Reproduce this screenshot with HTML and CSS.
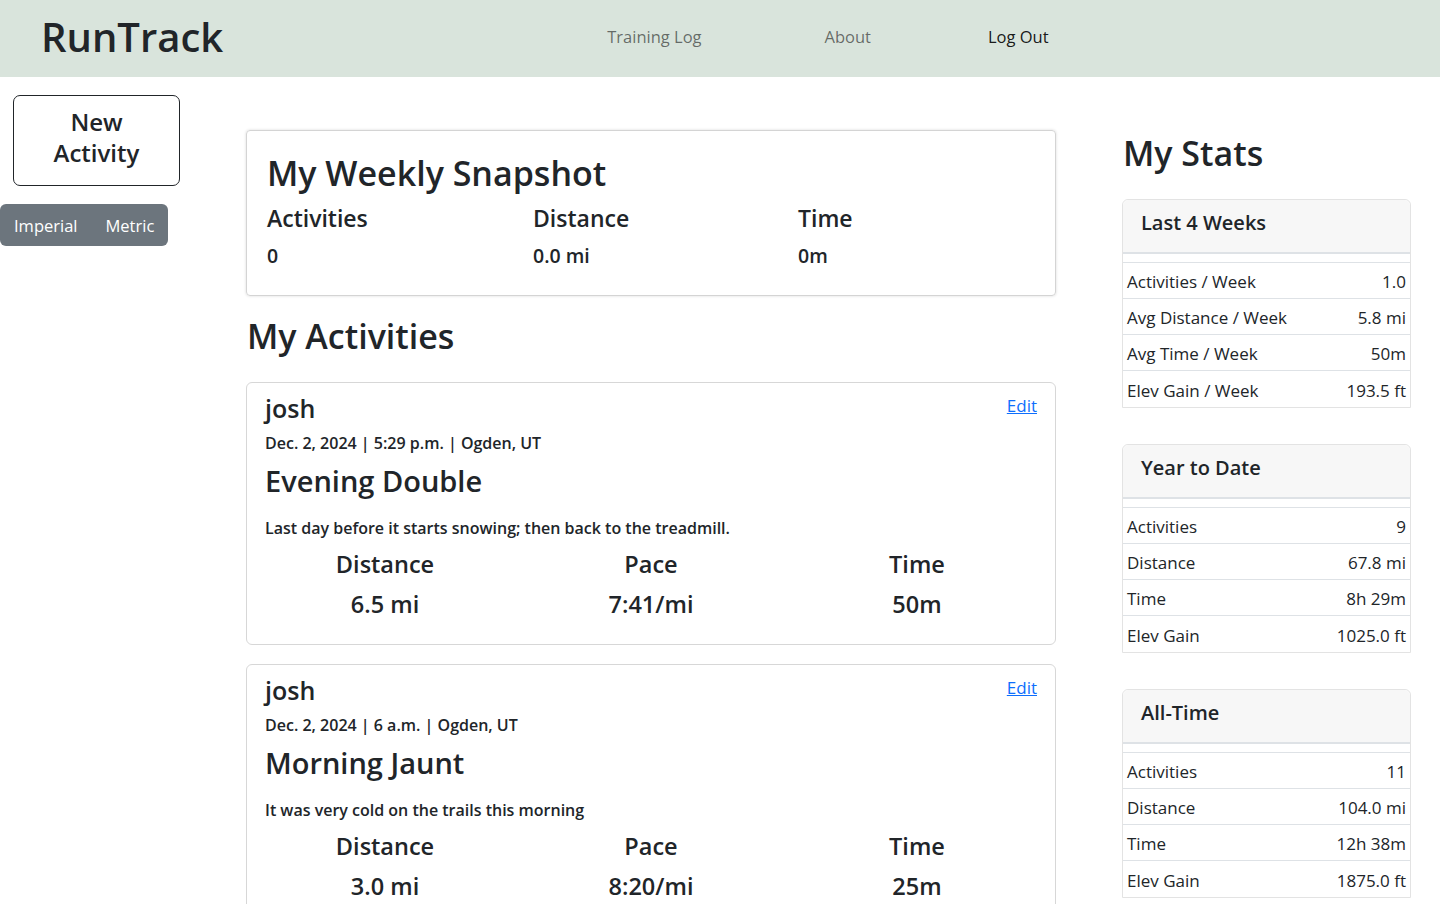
FILE: index.html
```html
<!DOCTYPE html>
<html lang="en">
<head>
<meta charset="utf-8">
<title>RunTrack</title>
<link rel="stylesheet" href="styles.css">
</head>
<body>
<nav class="navbar">
  <a class="brand" href="#">RunTrack</a>
  <ul class="nav-links">
    <li class="nav-item item-training"><a href="#">Training Log</a></li>
    <li class="nav-item item-about"><a href="#">About</a></li>
    <li class="nav-item item-logout"><a class="active" href="#">Log Out</a></li>
  </ul>
</nav>
<div class="layout">
  <aside class="sidebar">
    <a class="btn-new" href="#">New<br>Activity</a>
    <div class="btn-group">
      <button class="btn-unit">Imperial</button>
      <button class="btn-unit">Metric</button>
    </div>
  </aside>

  <main class="main">
    <section class="snapshot">
      <h1 class="snapshot-title">My Weekly Snapshot</h1>
      <div class="snapshot-grid">
        <div class="snap-col"><div class="snap-label">Activities</div><div class="snap-value">0</div></div>
        <div class="snap-col"><div class="snap-label">Distance</div><div class="snap-value">0.0 mi</div></div>
        <div class="snap-col"><div class="snap-label">Time</div><div class="snap-value">0m</div></div>
      </div>
    </section>

    <h1 class="section-title">My Activities</h1>

    <article class="activity">
      <div class="activity-top">
        <div class="activity-user">josh</div>
        <a class="edit-link" href="#">Edit</a>
      </div>
      <div class="activity-meta">Dec. 2, 2024 | 5:29 p.m. | Ogden, UT</div>
      <h2 class="activity-title">Evening Double</h2>
      <p class="activity-desc">Last day before it starts snowing; then back to the treadmill.</p>
      <div class="activity-stats">
        <div class="stat"><div class="stat-label">Distance</div><div class="stat-value">6.5 mi</div></div>
        <div class="stat"><div class="stat-label">Pace</div><div class="stat-value">7:41/mi</div></div>
        <div class="stat"><div class="stat-label">Time</div><div class="stat-value">50m</div></div>
      </div>
    </article>

    <article class="activity">
      <div class="activity-top">
        <div class="activity-user">josh</div>
        <a class="edit-link" href="#">Edit</a>
      </div>
      <div class="activity-meta">Dec. 2, 2024 | 6 a.m. | Ogden, UT</div>
      <h2 class="activity-title">Morning Jaunt</h2>
      <p class="activity-desc">It was very cold on the trails this morning</p>
      <div class="activity-stats">
        <div class="stat"><div class="stat-label">Distance</div><div class="stat-value">3.0 mi</div></div>
        <div class="stat"><div class="stat-label">Pace</div><div class="stat-value">8:20/mi</div></div>
        <div class="stat"><div class="stat-label">Time</div><div class="stat-value">25m</div></div>
      </div>
    </article>
  </main>

  <aside class="stats">
    <h1 class="stats-title">My Stats</h1>

    <section class="stat-card">
      <div class="stat-card-header">Last 4 Weeks</div>
      <div class="stat-card-spacer"></div>
      <div class="stat-row"><span>Activities / Week</span><span>1.0</span></div>
      <div class="stat-row"><span>Avg Distance / Week</span><span>5.8 mi</span></div>
      <div class="stat-row"><span>Avg Time / Week</span><span>50m</span></div>
      <div class="stat-row"><span>Elev Gain / Week</span><span>193.5 ft</span></div>
    </section>

    <section class="stat-card">
      <div class="stat-card-header">Year to Date</div>
      <div class="stat-card-spacer"></div>
      <div class="stat-row"><span>Activities</span><span>9</span></div>
      <div class="stat-row"><span>Distance</span><span>67.8 mi</span></div>
      <div class="stat-row"><span>Time</span><span>8h 29m</span></div>
      <div class="stat-row"><span>Elev Gain</span><span>1025.0 ft</span></div>
    </section>

    <section class="stat-card">
      <div class="stat-card-header">All-Time</div>
      <div class="stat-card-spacer"></div>
      <div class="stat-row"><span>Activities</span><span>11</span></div>
      <div class="stat-row"><span>Distance</span><span>104.0 mi</span></div>
      <div class="stat-row"><span>Time</span><span>12h 38m</span></div>
      <div class="stat-row"><span>Elev Gain</span><span>1875.0 ft</span></div>
    </section>
  </aside>
</div>
</body>
</html>
```

FILE: styles.css
```css
* { box-sizing: border-box; }

html, body { overflow: hidden; }

body {
  margin: 0;
  font-family: "Open Sans", "Noto Sans", sans-serif;
  color: #212529;
  background: #fff;
  font-size: 17px;
  line-height: 1.5;
}

h1, h2, p { margin: 0; }

/* Navbar */
.navbar {
  height: 77px;
  background: #d9e4dc;
  display: flex;
  align-items: center;
  padding-left: 41px;
}
.brand {
  font-size: 40px;
  font-weight: 600;
  color: #212529;
  text-decoration: none;
  line-height: 1;
  margin-top: -4px;
}
.nav-links {
  list-style: none;
  display: flex;
  margin: 0;
  padding: 0;
  margin-left: 384px;
  margin-top: -4px;
}
.nav-item a {
  font-size: 16.5px;
  color: rgba(0,0,0,0.55);
  text-decoration: none;
}
.nav-item a.active { color: rgba(0,0,0,0.9); }
.item-about { margin-left: 123px; }
.item-logout { margin-left: 117px; }

/* Layout */
.layout {
  display: grid;
  grid-template-columns: 246px 810px 355px;
  align-items: start;
}

/* Sidebar */
.sidebar {
  padding-top: 18px;
  display: flex;
  flex-direction: column;
  align-items: flex-start;
}
.btn-new {
  margin-left: 13px;
  width: 167px;
  height: 91px;
  border: 1px solid #212529;
  border-radius: 7px;
  padding-top: 10px;
  text-align: center;
  font-size: 24px;
  font-weight: 600;
  line-height: 31px;
  color: #212529;
  text-decoration: none;
}
.btn-group {
  margin-top: 18px;
  display: flex;
  background: #6c757d;
  border-radius: 6px;
  height: 42px;
}
.btn-unit {
  font-family: inherit;
  background: transparent;
  border: 0;
  color: #fff;
  font-size: 16.5px;
  padding: 0 14px;
}

/* Main */
.main { padding-top: 53px; }
.snapshot {
  border: 1px solid #d4d4d4;
  border-radius: 4px;
  box-shadow: 0 0 3px rgba(0,0,0,0.15);
  padding: 17px 20px 22px;
  height: 166px;
}
.snapshot-title {
  font-size: 34px;
  font-weight: 600;
  line-height: 50px;
}
.snapshot-grid {
  display: grid;
  grid-template-columns: 266px 265px 1fr;
}
.snap-label {
  font-size: 23px;
  font-weight: 600;
  line-height: 38px;
  padding-top: 1px;
}
.snap-value {
  font-size: 19.5px;
  font-weight: 600;
  line-height: 37px;
}

.section-title {
  font-size: 34px;
  font-weight: 600;
  line-height: 50px;
  margin: 15px 0 21px 1px;
}

.activity {
  border: 1px solid #d7d7d7;
  border-radius: 6px;
  padding: 8px 18px 20px;
  margin-bottom: 19px;
  height: 263px;
}
.activity-top {
  display: flex;
  justify-content: space-between;
  align-items: flex-start;
}
.activity-user {
  font-size: 25px;
  font-weight: 600;
  line-height: 35px;
}
.edit-link {
  color: #0d6efd;
  font-size: 17px;
  margin-top: 2px;
}
.activity-meta {
  font-size: 16px;
  font-weight: 600;
  line-height: 32px;
  padding-top: 1px;
}
.activity-title {
  font-size: 29px;
  font-weight: 600;
  line-height: 44px;
}
.activity-desc {
  font-size: 16px;
  font-weight: 600;
  line-height: 26px;
  margin-top: 12px;
}
.activity-stats {
  display: grid;
  grid-template-columns: repeat(3, 1fr);
  margin: 3px -13px 0;
  text-align: center;
}
.stat-label, .stat-value {
  font-size: 23.5px;
  font-weight: 600;
  line-height: 40px;
}

/* Stats column */
.stats { padding-left: 66px; padding-top: 53px; }
.stats-title {
  font-size: 34px;
  font-weight: 600;
  line-height: 50px;
  margin-top: -2px;
  margin-bottom: 21px;
  margin-left: 1px;
}
.stat-card {
  border: 1px solid #e3e3e3;
  border-radius: 6px 6px 0 0;
  margin-bottom: 36px;
}
.stat-card-header {
  background: #f7f7f7;
  height: 54px;
  padding: 7px 18px 0;
  font-size: 20px;
  font-weight: 600;
  line-height: 32px;
  border-bottom: 2px solid #dee2e6;
  border-radius: 6px 6px 0 0;
}
.stat-card-spacer {
  height: 9px;
  border-bottom: 1px solid #dee2e6;
}
.stat-row {
  display: flex;
  justify-content: space-between;
  padding: 3px 4px 0;
  height: 36px;
  align-items: center;
  font-size: 17px;
  border-bottom: 1px solid #dee2e6;
}
.stat-row:last-child { border-bottom: 0; }
```
